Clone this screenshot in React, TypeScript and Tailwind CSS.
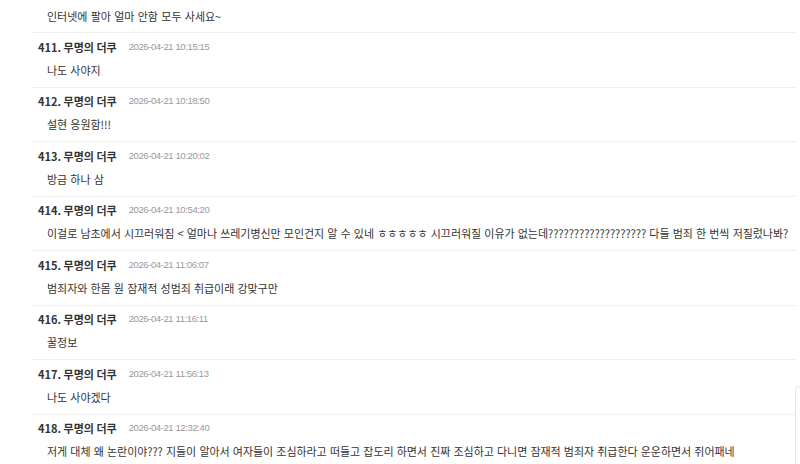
const comments = [
  { no: 411, date: '2026-04-21 10:15:15', text: '나도 사야지' },
  { no: 412, date: '2026-04-21 10:18:50', text: '설현 응원함!!!' },
  { no: 413, date: '2026-04-21 10:20:02', text: '방금 하나 삼' },
  {
    no: 414,
    date: '2026-04-21 10:54:20',
    text: '이걸로 남초에서 시끄러워짐 < 얼마나 쓰레기병신만 모인건지 알 수 있네 ㅎㅎㅎㅎㅎ 시끄러워질 이유가 없는데??????????????????? 다들 범죄 한 번씩 저질렀나봐?',
  },
  { no: 415, date: '2026-04-21 11:06:07', text: '범죄자와 한몸 원 잠재적 성범죄 취급이래 강맞구만' },
  { no: 416, date: '2026-04-21 11:16:11', text: '꿀정보' },
  { no: 417, date: '2026-04-21 11:56:13', text: '나도 사야겠다' },
  {
    no: 418,
    date: '2026-04-21 12:32:40',
    text: '저게 대체 왜 논란이야??? 지들이 알아서 여자들이 조심하라고 떠들고 잡도리 하면서 진짜 조심하고 다니면 잠재적 범죄자 취급한다 운운하면서 쥐어패네',
  },
];

export default function App() {
  return (
    <div className="relative h-[464px] w-[800px] overflow-hidden bg-white font-['Noto_Sans_CJK_KR','Noto_Sans',sans-serif] text-[#333]">
      <div className="w-[796px] pl-[32px]">
        {/* tail of previous comment */}
        <div className="flex h-[32px] items-center pl-[15px] text-[11px] [word-spacing:0.8px]">
          인터넷에 팔아 얼마 안함 모두 사세요~
        </div>

        {comments.map((c) => (
          <div key={c.no} className="h-[54.5px] border-t border-[#efefef]">
            <div className="mt-[7px] flex h-[14px] items-center pl-[6px]">
              <span className="text-[11px] font-bold text-[#333]">
                {c.no}. 무명의 더쿠
              </span>
              <span className="ml-[12px] font-['Liberation_Sans',sans-serif] text-[9.5px] tracking-[-0.4px] text-[#999]">
                {c.date}
              </span>
            </div>
            <div className="mt-[8px] flex h-[16px] items-center whitespace-nowrap pl-[15px] text-[11px] tracking-[-0.05px] [word-spacing:0.8px]">
              {c.text}
            </div>
          </div>
        ))}
      </div>

      {/* edge of side panel */}
      <div className="absolute left-[795px] top-[386px] h-[100px] w-[20px] rounded-tl-[4px] border border-[#e5e5e5]" />
    </div>
  );
}
